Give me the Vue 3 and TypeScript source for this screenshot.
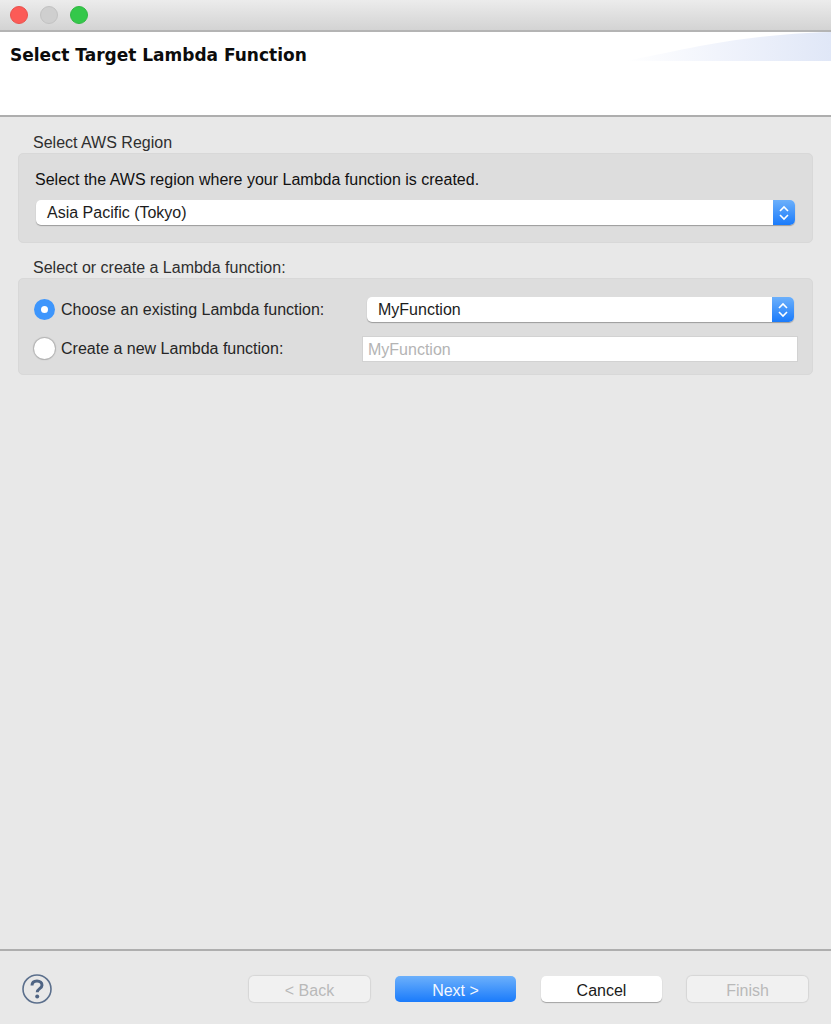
<script setup lang="ts">
const footerButtons = [
  { label: '< Back', kind: 'disabled' },
  { label: 'Next >', kind: 'primary' },
  { label: 'Cancel', kind: 'normal' },
  { label: 'Finish', kind: 'disabled' },
];
</script>

<template>
  <div class="dialog">
    <div class="titlebar">
      <span class="light red" />
      <span class="light gray" />
      <span class="light green" />
    </div>

    <div class="header">
      <svg class="banner" width="206" height="29" viewBox="0 0 206 29" aria-hidden="true">
        <defs>
          <linearGradient id="bannerFill" x1="0" x2="1" y1="0" y2="0">
            <stop offset="0" stop-color="#ffffff" />
            <stop offset="0.45" stop-color="#f1f4fc" />
            <stop offset="1" stop-color="#e0e7f7" />
          </linearGradient>
        </defs>
        <path d="M0 29 C60 18 110 3 206 0 L206 29 Z" fill="url(#bannerFill)" />
      </svg>
      <h1 class="title">Select Target Lambda Function</h1>
    </div>

    <div class="body">
      <div class="group-label first">Select AWS Region</div>
      <section class="group region">
        <div class="hint">Select the AWS region where your Lambda function is created.</div>
        <div class="select">
          <span class="select-text">Asia Pacific (Tokyo)</span>
          <span class="stepper">
            <svg width="12" height="18" viewBox="0 0 12 18" aria-hidden="true">
              <path d="M2 7 L6 3 L10 7 M2 11 L6 15 L10 11" fill="none" stroke="#fff" stroke-width="1.6" />
            </svg>
          </span>
        </div>
      </section>

      <div class="group-label second">Select or create a Lambda function:</div>
      <section class="group lambda">
        <div class="choice-row">
          <span class="radio on"><span class="dot" /></span>
          <span class="choice-label">Choose an existing Lambda function:</span>
          <div class="select grow">
            <span class="select-text">MyFunction</span>
            <span class="stepper">
              <svg width="12" height="18" viewBox="0 0 12 18" aria-hidden="true">
                <path d="M2 7 L6 3 L10 7 M2 11 L6 15 L10 11" fill="none" stroke="#fff" stroke-width="1.6" />
              </svg>
            </span>
          </div>
        </div>
        <div class="choice-row second-row">
          <span class="radio" />
          <span class="choice-label short">Create a new Lambda function:</span>
          <div class="textbox">MyFunction</div>
        </div>
      </section>
    </div>

    <div class="footer">
      <svg class="help" width="32" height="32" viewBox="0 0 32 32" aria-label="Help">
        <circle cx="16" cy="16" r="14" fill="none" stroke="#5b6f8c" stroke-width="1.6" />
        <path d="M11 12.5 C11 9.5 13.2 8 16 8 C19 8 21 9.8 21 12.2 C21 15.6 16.2 15.6 16.2 19.2" fill="none" stroke="#4f6483" stroke-width="3" />
        <circle cx="16.2" cy="23.4" r="2" fill="#4f6483" />
      </svg>
      <div class="buttons">
        <button v-for="b in footerButtons" :key="b.label" class="btn" :class="b.kind" type="button">{{ b.label }}</button>
      </div>
    </div>
  </div>
</template>

<style>
html,
body {
  margin: 0;
  background: #e8e8e8;
}
</style>

<style scoped>
.dialog {
  width: 831px;
  height: 1024px;
  display: flex;
  flex-direction: column;
  background: #e8e8e8;
  color: #222;
  font-family: "Liberation Sans", Arial, sans-serif;
  font-size: 16px;
  overflow: hidden;
}

.titlebar {
  height: 30px;
  flex: none;
  display: flex;
  align-items: center;
  gap: 12px;
  padding-left: 10px;
  background: linear-gradient(#ececec, #d3d3d3);
  border-bottom: 2px solid #b4b4b4;
  box-sizing: content-box;
}

.light {
  width: 18px;
  height: 18px;
  border-radius: 50%;
  box-sizing: border-box;
}
.red { background: #fc5b57; border: 1px solid #e9514c; }
.gray { background: #cfcfcf; border: 1px solid #c2c2c2; }
.green { background: #34c84a; border: 1px solid #2fb842; }

.header {
  position: relative;
  height: 83px;
  flex: none;
  background: #fff;
  border-bottom: 2px solid #aeaeae;
}

.banner {
  position: absolute;
  top: 0;
  right: 0;
}

.title {
  position: relative;
  margin: 0;
  padding: 12px 0 0 10px;
  font-family: "DejaVu Sans", Verdana, sans-serif;
  font-size: 17px;
  line-height: 22px;
  font-weight: 700;
  color: #0c0c0c;
}

.body {
  flex: 1;
  padding: 0 18px;
}

.group-label {
  padding-left: 15px;
  height: 20px;
  line-height: 20px;
  color: #2f2f2f;
}
.group-label.first { margin-top: 16px; }
.group-label.second { margin-top: 15px; }

.group {
  background: #dddddd;
  border: 1px solid #d8d8d8;
  border-radius: 5px;
  box-sizing: border-box;
}

.region {
  height: 90px;
  padding: 15px 17px 0 16px;
}

.hint {
  height: 22px;
  line-height: 22px;
  color: #111;
}

.select {
  height: 25px;
  margin-top: 9px;
  margin-left: 1px;
  display: flex;
  align-items: stretch;
  background: #fff;
  border-radius: 5px;
  box-shadow: 0 1px 1px rgba(0, 0, 0, 0.3);
}

.select-text {
  flex: 1;
  padding-left: 11px;
  line-height: 25px;
  color: #1c1c1c;
}

.stepper {
  width: 22px;
  display: flex;
  align-items: center;
  justify-content: center;
  background: linear-gradient(#6cb0fb, #1a7bfb);
  border-radius: 0 5px 5px 0;
}

.lambda {
  height: 97px;
  padding: 18px 14px 0 15px;
}

.choice-row {
  display: flex;
  align-items: center;
  height: 25px;
}
.second-row {
  margin-top: 14px;
}

.radio {
  width: 21px;
  height: 21px;
  flex: none;
  display: flex;
  align-items: center;
  justify-content: center;
  border-radius: 50%;
  background: #fff;
  box-shadow: 0 0 1px 1px rgba(0, 0, 0, 0.2);
  box-sizing: border-box;
}
.radio.on {
  background: #3e96fc;
  box-shadow: none;
}
.dot {
  width: 7px;
  height: 7px;
  border-radius: 50%;
  background: #fff;
}

.choice-label {
  margin-left: 6px;
  width: 306px;
  flex: none;
  line-height: 25px;
  color: #262626;
}
.choice-label.short {
  width: 301px;
}

.select.grow {
  flex: 1;
  margin: 0 4px 0 0;
}

.textbox {
  flex: 1;
  height: 26px;
  margin-top: 1px;
  padding-left: 5px;
  line-height: 26px;
  background: #fff;
  border: 1px solid #d2d2d2;
  color: #b4b4b4;
  box-sizing: border-box;
}

.footer {
  height: 73px;
  flex: none;
  display: flex;
  align-items: center;
  justify-content: space-between;
  padding: 0 23px 0 21px;
  border-top: 2px solid #aeaeae;
}

.help {
  flex: none;
  margin-top: 2px;
}

.buttons {
  display: flex;
  gap: 25px;
  margin-top: 2px;
}

.btn {
  width: 121px;
  height: 26px;
  padding: 2px 0 0;
  border: none;
  border-radius: 5px;
  font: inherit;
  line-height: 26px;
}
.btn.disabled {
  background: #f1f1f1;
  color: #b9b9b9;
  box-shadow: 0 0 1px 1px rgba(0, 0, 0, 0.08);
}
.btn.primary {
  background: linear-gradient(#6cb0fb, #1a7bfb);
  color: #f3f8ff;
}
.btn.normal {
  background: #fff;
  color: #1a1a1a;
  box-shadow: 0 1px 1px 0 rgba(0, 0, 0, 0.3);
}
</style>
